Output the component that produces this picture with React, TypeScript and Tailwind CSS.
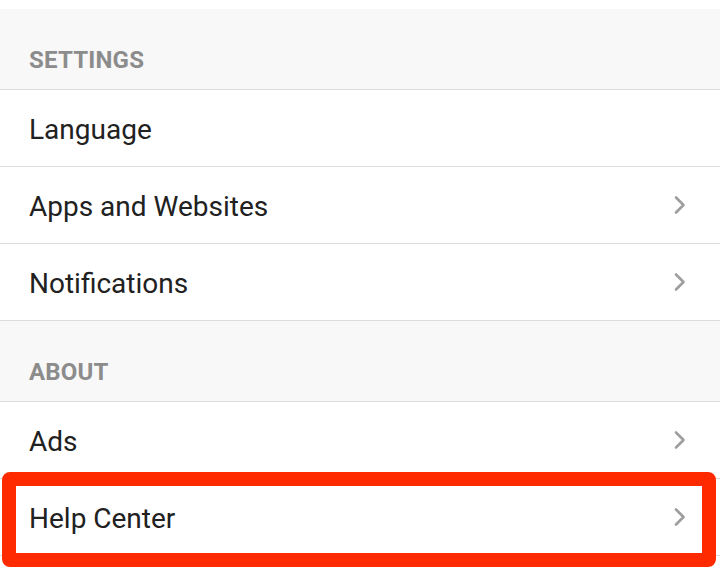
const font = { fontFamily: 'Roboto, "Noto Sans", sans-serif' };

function Chevron() {
  return (
    <svg width="14" height="20" viewBox="0 0 14 20" className="text-[#9e9e9e]">
      <path d="M3 2.5 L10.5 10 L3 17.5" fill="none" stroke="currentColor" strokeWidth="2.6" strokeLinecap="round" strokeLinejoin="round" />
    </svg>
  );
}

function SectionHeader({ label }: { label: string }) {
  return (
    <div className="h-[81px] bg-[#f8f8f8] border-b border-[#dcdcdc] flex items-end pl-[29px] pb-[17px]">
      <span className="text-[24px] font-bold tracking-[0.2px] text-[#8c8c8c] leading-none">{label}</span>
    </div>
  );
}

function Row({ label, chevron = true }: { label: string; chevron?: boolean }) {
  return (
    <div className="h-[77px] bg-white border-b border-[#dcdcdc] flex items-center justify-between pl-[29px] pr-[33px]">
      <span className="text-[28px] text-[#212121] leading-none pt-[3px]">{label}</span>
      {chevron && <Chevron />}
    </div>
  );
}

export default function App() {
  return (
    <div className="w-[720px] h-[571px] overflow-hidden bg-white" style={font}>
      <div className="h-[9px] bg-white" />
      <SectionHeader label="SETTINGS" />
      <Row label="Language" chevron={false} />
      <Row label="Apps and Websites" />
      <Row label="Notifications" />
      <SectionHeader label="ABOUT" />
      <Row label="Ads" />
      <div className="relative">
        <Row label="Help Center" />
        <div className="absolute left-[2px] right-[4px] top-[-7px] bottom-[-11px] border-[14px] border-[#ff2a00] rounded-[8px] pointer-events-none" />
      </div>
    </div>
  );
}
